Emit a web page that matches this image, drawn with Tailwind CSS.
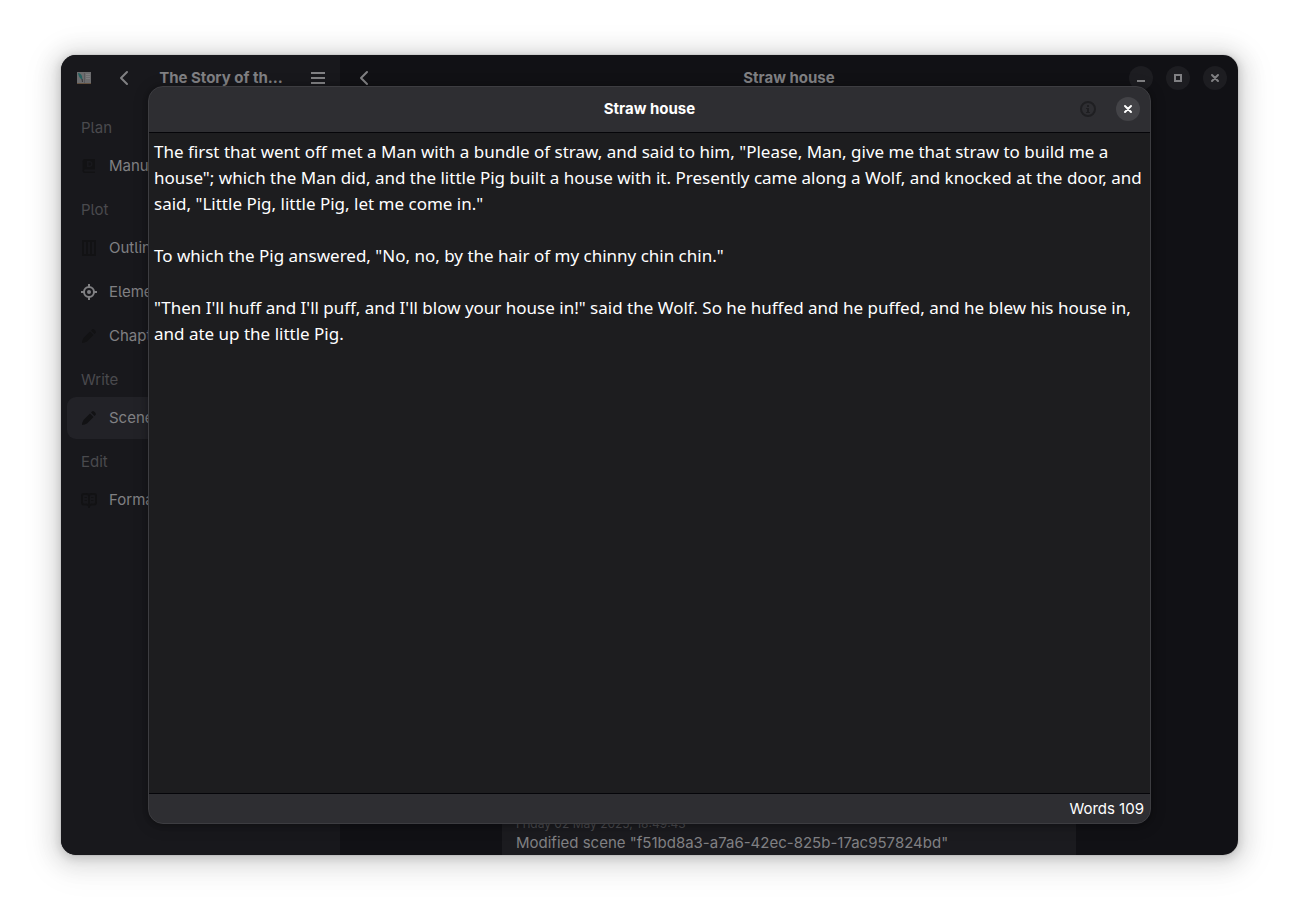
<!DOCTYPE html>
<html lang="en">
<head>
<meta charset="utf-8">
<meta name="viewport" content="width=device-width, initial-scale=1">
<title>Straw house</title>
<script src="https://cdn.jsdelivr.net/npm/@tailwindcss/browser@4"></script>
</head>
<body class="bg-white">
<div class="h-screen px-[61px] pt-[55px] pb-[67px] font-['Inter',sans-serif] text-[15px] leading-5 text-[#808083] [font-feature-settings:'cv05']">
  <div class="relative h-full overflow-hidden rounded-[15px] bg-[#111115] shadow-[0_0_0_1px_rgba(0,0,0,0.05),0_2px_8px_2px_rgba(0,0,0,0.13),0_3px_20px_10px_rgba(0,0,0,0.09),0_6px_32px_16px_rgba(0,0,0,0.04)]">
    <div class="flex h-full">

      <aside class="flex w-[279px] shrink-0 flex-col bg-[#18181c]">
        <header class="flex h-[46px] items-center pr-[6px] pl-4">
          <svg class="h-3 w-[14px] shrink-0" viewBox="0 0 14 12" aria-hidden="true">
            <path d="M0 0h14v11H0z" fill="#6c6c6e"/>
            <path d="M0 11h14v1H0z" fill="#64513f"/>
            <path d="M7 1h1v10H7z" fill="#59595c"/>
            <path d="M9 2h4v1H9zM9 4h4v1H9zM9 6h4v1H9z" fill="#7d7d80"/>
            <path d="M1 1q3 0 4 3.500L5.500 8 3 6Q1.500 4 1 1z" fill="#23605f"/>
            <path d="M4.500 7h1l.5 3H5z" fill="#353538"/>
          </svg>
          <button class="ml-[17px] flex size-8 items-center justify-center" aria-label="Back">
            <svg class="size-4" viewBox="0 0 16 16" fill="none" stroke="currentColor" stroke-width="2" stroke-linecap="round" stroke-linejoin="round"><path d="M11 2 5 8l6 6"/></svg>
          </button>
          <h2 class="min-w-0 flex-1 truncate px-1 text-center font-bold">The Story of th…</h2>
          <button class="flex size-8 items-center justify-center" aria-label="Main menu">
            <svg class="size-4" viewBox="0 0 16 16" fill="currentColor"><path d="M1 2h14v2H1zM1 7h14v2H1zM1 12h14v2H1z"/></svg>
          </button>
        </header>
        <nav class="flex flex-col px-[6px]">
          <h3 class="mt-[17px] mb-[7px] px-[14px] text-[#4a4a4e]">Plan</h3>
          <a href="#" class="mb-[2px] flex h-[42px] items-center gap-3 rounded-[9px] px-[14px]">
            <svg class="size-4" viewBox="0 0 16 16" fill="#121214"><path fill-rule="evenodd" d="M4 1h10v10.500H4a1 1 0 0 0 0 2h10V15H4q-2.500 0-2.500-2.500v-9Q1.500 1 4 1zM6 3v6h2.500a3 3 0 0 0 0-6zM7.500 4.500h1a1.500 1.500 0 0 1 0 3h-1z"/></svg>
            Manuscript</a>
          <h3 class="mt-[11px] mb-[7px] px-[14px] text-[#4a4a4e]">Plot</h3>
          <a href="#" class="mb-[2px] flex h-[42px] items-center gap-3 rounded-[9px] px-[14px]">
            <svg class="size-4" viewBox="0 0 16 16" fill="none" stroke="#121214" stroke-width="2"><path d="M2 1h12v14H2zM6 1v14M10 1v14"/></svg>
            Outline</a>
          <a href="#" class="mb-[2px] flex h-[42px] items-center gap-3 rounded-[9px] px-[14px]">
            <svg class="size-4" viewBox="0 0 16 16" fill="none" stroke="currentColor" stroke-width="2"><circle cx="8" cy="8" r="5"/><path d="M8 0v3M8 13v3M0 8h3M13 8h3"/><circle cx="8" cy="8" r="2" fill="currentColor" stroke="none"/></svg>
            Elements</a>
          <a href="#" class="mb-[2px] flex h-[42px] items-center gap-3 rounded-[9px] px-[14px]">
            <svg class="size-4" viewBox="0 0 16 16" fill="#121214"><path d="M9 3.500 12.500 7 6 13.500q-2 1.200-5 1.500 0-2.500 1.500-5zM10 2.500l1-1q1-1 2.300.200l1 1q1.200 1.300.200 2.300l-1 1z"/></svg>
            Chapters</a>
          <h3 class="mt-[11px] mb-[7px] px-[14px] text-[#4a4a4e]">Write</h3>
          <a href="#" aria-current="page" class="mb-[2px] flex h-[42px] items-center gap-3 rounded-[9px] bg-[#222227] px-[14px]">
            <svg class="size-4" viewBox="0 0 16 16" fill="#121214"><path d="M9 3.500 12.500 7 6 13.500q-2 1.200-5 1.500 0-2.500 1.500-5zM10 2.500l1-1q1-1 2.300.200l1 1q1.200 1.300.200 2.300l-1 1z"/></svg>
            Scenes</a>
          <h3 class="mt-[11px] mb-[7px] px-[14px] text-[#4a4a4e]">Edit</h3>
          <a href="#" class="flex h-[42px] items-center gap-3 rounded-[9px] px-[14px]">
            <svg class="size-4" viewBox="0 0 16 16" fill="none" stroke="#121214" stroke-width="2"><path d="M8 3Q7 2 5.500 2H3Q1 2 1 4v6.500q0 2 2 2h2.500Q7 12.500 8 14q1-1.500 2.500-1.500H13q2 0 2-2V4q0-2-2-2h-2.500Q9 2 8 3zM8 3v13"/><path d="M3.500 5.500H6M3.500 8.500H6M10 5.500h2.500M10 8.500h2.500" stroke-width="1"/></svg>
            Formatting</a>
        </nav>
      </aside>

      <main class="flex min-w-0 flex-1 flex-col">
        <header class="grid h-[46px] grid-cols-[1fr_auto_1fr] items-center px-[11px]">
          <button class="flex h-8 w-[26px] items-center justify-center" aria-label="Back">
            <svg class="size-4" viewBox="0 0 16 16" fill="none" stroke="currentColor" stroke-width="2" stroke-linecap="round" stroke-linejoin="round"><path d="M11 2 5 8l6 6"/></svg>
          </button>
          <h1 class="font-bold">Straw house</h1>
          <div class="flex justify-end gap-[13px]">
            <button class="flex size-6 items-center justify-center rounded-full bg-[#1d1d21]" aria-label="Minimize">
              <svg class="size-4" viewBox="0 0 16 16" fill="currentColor"><path d="M4 10h8v2H4z"/></svg></button>
            <button class="flex size-6 items-center justify-center rounded-full bg-[#1d1d21]" aria-label="Maximize">
              <svg class="size-4" viewBox="0 0 16 16" fill="none" stroke="currentColor" stroke-width="2"><path d="M5 5h6v6H5z"/></svg></button>
            <button class="flex size-6 items-center justify-center rounded-full bg-[#1d1d21]" aria-label="Close window">
              <svg class="size-4" viewBox="0 0 16 16" fill="none" stroke="currentColor" stroke-width="2" stroke-linecap="round"><path d="m5 5 6 6M11 5l-6 6"/></svg></button>
          </div>
        </header>
        <section class="mx-[162px] flex flex-1 flex-col justify-end bg-[#1b1b1f] px-[14px] pb-[2px]">
          <p class="text-[12px] leading-[18px] text-[#4a4a4e]">Friday 02 May 2025, 18:49:43</p>
          <p>Modified scene "f51bd8a3-a7a6-42ec-825b-17ac957824bd"</p>
        </section>
      </main>
    </div>

    <div role="dialog" aria-labelledby="dialog-title" class="absolute inset-x-[87px] inset-y-[31px] flex flex-col overflow-hidden rounded-[15px] border border-[#3d3d41] bg-[#2e2e32] text-white shadow-[0_1px_5px_1px_rgba(0,0,0,0.2),0_2px_14px_3px_rgba(0,0,0,0.12)]">
      <header class="grid h-[46px] shrink-0 grid-cols-[1fr_auto_1fr] items-center border-b border-[#050509] px-[10px] pb-[1px]">
        <h2 id="dialog-title" class="col-start-2 font-bold">Straw house</h2>
        <div class="flex justify-end gap-4">
          <button class="flex size-6 items-center justify-center" aria-label="Scene information">
            <svg class="size-4" viewBox="0 0 16 16" fill="none" stroke="#1f1f22"><circle cx="8" cy="8" r="7" stroke-width="2"/><path d="M7 4h2v2H7zM6 7h3v4h1v1H6v-1h1V8H6z" fill="#1f1f22" stroke="none"/></svg>
          </button>
          <button class="flex size-6 items-center justify-center rounded-full bg-[#434347]" aria-label="Close">
            <svg class="size-4" viewBox="0 0 16 16" fill="none" stroke="currentColor" stroke-width="2" stroke-linecap="round"><path d="m5 5 6 6M11 5l-6 6"/></svg></button>
        </div>
      </header>
      <textarea aria-label="Scene text" spellcheck="false" class="w-full flex-1 resize-none bg-[#1d1d1f] px-[5px] py-[6px] font-['Noto_Sans',sans-serif] text-[17px] leading-[26px] outline-none">The first that went off met a Man with a bundle of straw, and said to him, "Please, Man, give me that straw to build me a house"; which the Man did, and the little Pig built a house with it. Presently came along a Wolf, and knocked at the door, and said, "Little Pig, little Pig, let me come in."

To which the Pig answered, "No, no, by the hair of my chinny chin chin."

"Then I'll huff and I'll puff, and I'll blow your house in!" said the Wolf. So he huffed and he puffed, and he blew his house in, and ate up the little Pig.</textarea>
      <footer class="flex h-[30px] shrink-0 items-center justify-end border-t border-[#050509] px-[6px]">Words 109</footer>
    </div>
  </div>
</div>
</body>
</html>
